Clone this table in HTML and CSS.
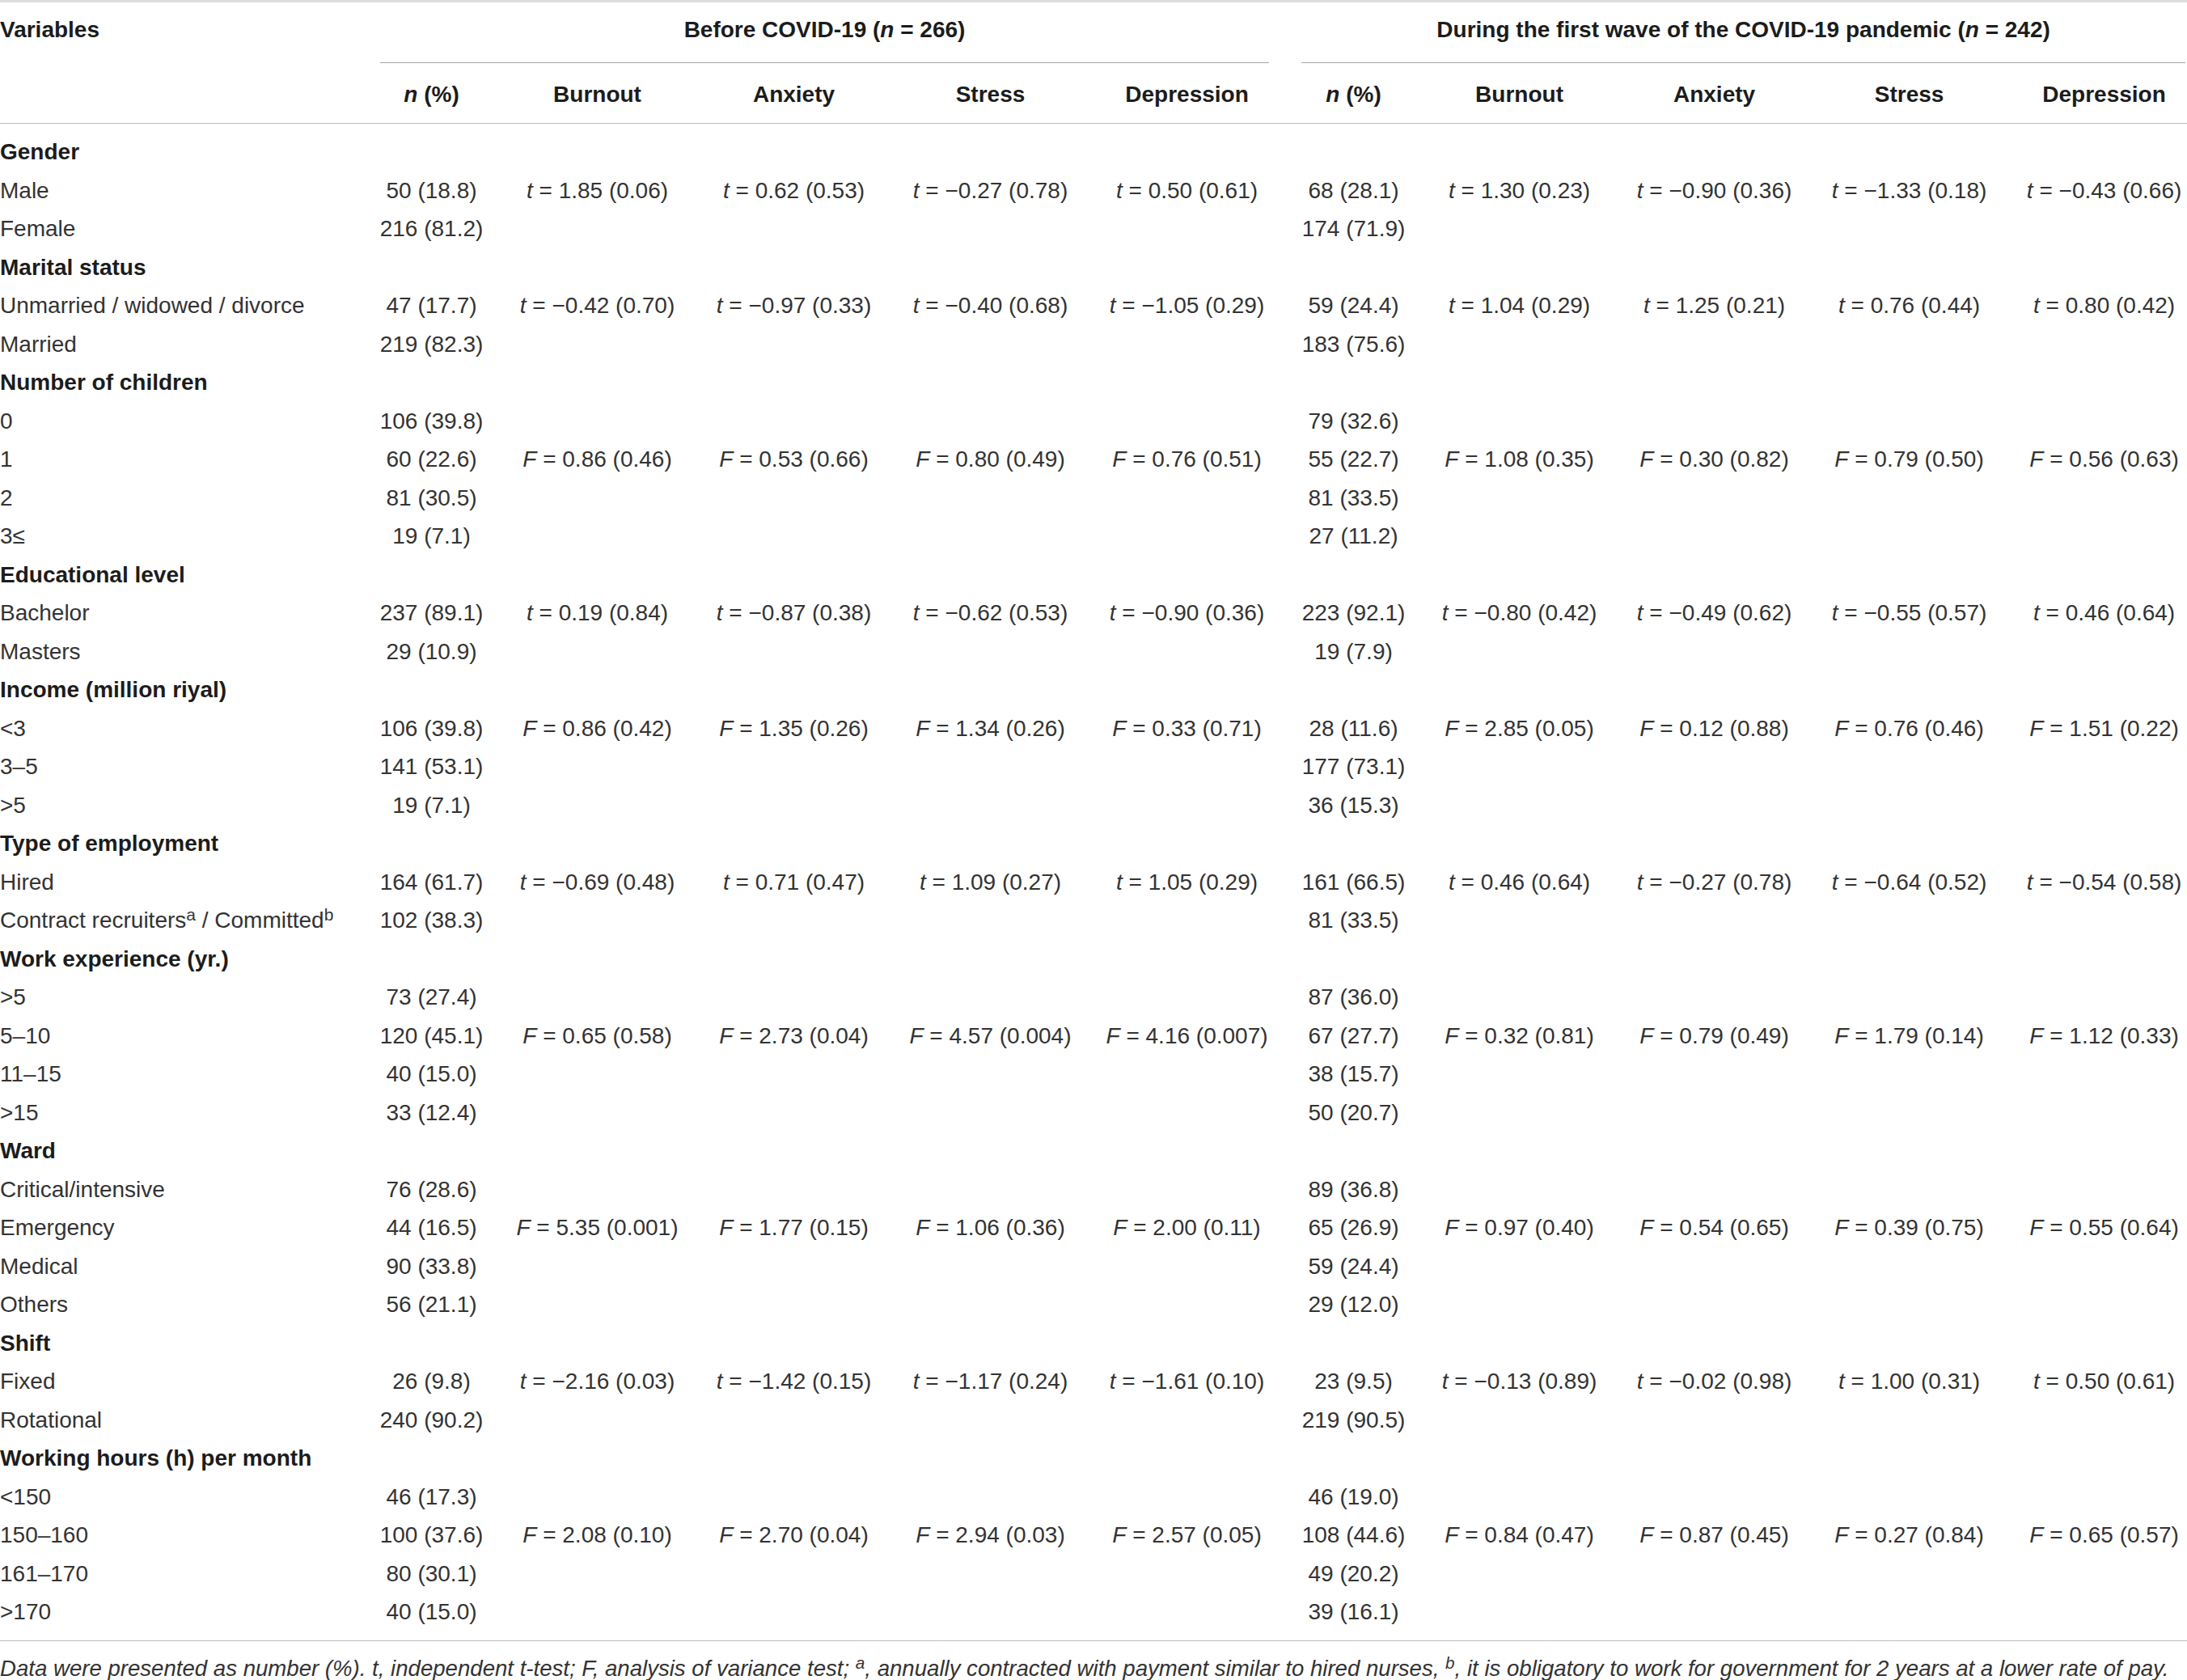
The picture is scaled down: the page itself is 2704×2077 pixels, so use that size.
FILE: index.html
```html
<!DOCTYPE html>
<html lang="en">
<head>
    <meta charset="UTF-8">
    <meta name="viewport" content="width=device-width, initial-scale=1.0">
    <title>Table: burnout, anxiety, stress and depression by demographic variables</title>
    <link rel="stylesheet" href="styles.css">
</head>
<body>
    <table class="data-table">
        <colgroup>
            <col class="col-label">
            <col class="col-n1">
            <col class="col-stat1"><col class="col-stat1"><col class="col-stat1"><col class="col-stat1">
            <col class="col-n2">
            <col class="col-stat2"><col class="col-stat2"><col class="col-stat2"><col class="col-stat2">
        </colgroup>
        <thead>
            <tr class="group-row">
                <th class="label">Variables</th>
                <th class="group" colspan="5"><div class="group-title">Before COVID-19 (<i>n</i> = 266)</div></th>
                <th class="group" colspan="5"><div class="group-title">During the first wave of the COVID-19 pandemic (<i>n</i> = 242)</div></th>
            </tr>
            <tr class="head-row">
                <th class="label"></th>
                <th><i>n</i> (%)</th>
                <th>Burnout</th>
                <th>Anxiety</th>
                <th>Stress</th>
                <th>Depression</th>
                <th><i>n</i> (%)</th>
                <th>Burnout</th>
                <th>Anxiety</th>
                <th>Stress</th>
                <th>Depression</th>
            </tr>
        </thead>
        <tbody>
            <tr class="category"><td colspan="11">Gender</td></tr>
            <tr><td>Male</td><td>50 (18.8)</td><td><i>t</i> = 1.85 (0.06)</td><td><i>t</i> = 0.62 (0.53)</td><td><i>t</i> = −0.27 (0.78)</td><td><i>t</i> = 0.50 (0.61)</td><td>68 (28.1)</td><td><i>t</i> = 1.30 (0.23)</td><td><i>t</i> = −0.90 (0.36)</td><td><i>t</i> = −1.33 (0.18)</td><td><i>t</i> = −0.43 (0.66)</td></tr>
            <tr><td>Female</td><td>216 (81.2)</td><td></td><td></td><td></td><td></td><td>174 (71.9)</td><td></td><td></td><td></td><td></td></tr>

            <tr class="category"><td colspan="11">Marital status</td></tr>
            <tr><td>Unmarried / widowed / divorce</td><td>47 (17.7)</td><td><i>t</i> = −0.42 (0.70)</td><td><i>t</i> = −0.97 (0.33)</td><td><i>t</i> = −0.40 (0.68)</td><td><i>t</i> = −1.05 (0.29)</td><td>59 (24.4)</td><td><i>t</i> = 1.04 (0.29)</td><td><i>t</i> = 1.25 (0.21)</td><td><i>t</i> = 0.76 (0.44)</td><td><i>t</i> = 0.80 (0.42)</td></tr>
            <tr><td>Married</td><td>219 (82.3)</td><td></td><td></td><td></td><td></td><td>183 (75.6)</td><td></td><td></td><td></td><td></td></tr>

            <tr class="category"><td colspan="11">Number of children</td></tr>
            <tr><td>0</td><td>106 (39.8)</td><td></td><td></td><td></td><td></td><td>79 (32.6)</td><td></td><td></td><td></td><td></td></tr>
            <tr><td>1</td><td>60 (22.6)</td><td><i>F</i> = 0.86 (0.46)</td><td><i>F</i> = 0.53 (0.66)</td><td><i>F</i> = 0.80 (0.49)</td><td><i>F</i> = 0.76 (0.51)</td><td>55 (22.7)</td><td><i>F</i> = 1.08 (0.35)</td><td><i>F</i> = 0.30 (0.82)</td><td><i>F</i> = 0.79 (0.50)</td><td><i>F</i> = 0.56 (0.63)</td></tr>
            <tr><td>2</td><td>81 (30.5)</td><td></td><td></td><td></td><td></td><td>81 (33.5)</td><td></td><td></td><td></td><td></td></tr>
            <tr><td>3≤</td><td>19 (7.1)</td><td></td><td></td><td></td><td></td><td>27 (11.2)</td><td></td><td></td><td></td><td></td></tr>

            <tr class="category"><td colspan="11">Educational level</td></tr>
            <tr><td>Bachelor</td><td>237 (89.1)</td><td><i>t</i> = 0.19 (0.84)</td><td><i>t</i> = −0.87 (0.38)</td><td><i>t</i> = −0.62 (0.53)</td><td><i>t</i> = −0.90 (0.36)</td><td>223 (92.1)</td><td><i>t</i> = −0.80 (0.42)</td><td><i>t</i> = −0.49 (0.62)</td><td><i>t</i> = −0.55 (0.57)</td><td><i>t</i> = 0.46 (0.64)</td></tr>
            <tr><td>Masters</td><td>29 (10.9)</td><td></td><td></td><td></td><td></td><td>19 (7.9)</td><td></td><td></td><td></td><td></td></tr>

            <tr class="category"><td colspan="11">Income (million riyal)</td></tr>
            <tr><td>&lt;3</td><td>106 (39.8)</td><td><i>F</i> = 0.86 (0.42)</td><td><i>F</i> = 1.35 (0.26)</td><td><i>F</i> = 1.34 (0.26)</td><td><i>F</i> = 0.33 (0.71)</td><td>28 (11.6)</td><td><i>F</i> = 2.85 (0.05)</td><td><i>F</i> = 0.12 (0.88)</td><td><i>F</i> = 0.76 (0.46)</td><td><i>F</i> = 1.51 (0.22)</td></tr>
            <tr><td>3–5</td><td>141 (53.1)</td><td></td><td></td><td></td><td></td><td>177 (73.1)</td><td></td><td></td><td></td><td></td></tr>
            <tr><td>&gt;5</td><td>19 (7.1)</td><td></td><td></td><td></td><td></td><td>36 (15.3)</td><td></td><td></td><td></td><td></td></tr>

            <tr class="category"><td colspan="11">Type of employment</td></tr>
            <tr><td>Hired</td><td>164 (61.7)</td><td><i>t</i> = −0.69 (0.48)</td><td><i>t</i> = 0.71 (0.47)</td><td><i>t</i> = 1.09 (0.27)</td><td><i>t</i> = 1.05 (0.29)</td><td>161 (66.5)</td><td><i>t</i> = 0.46 (0.64)</td><td><i>t</i> = −0.27 (0.78)</td><td><i>t</i> = −0.64 (0.52)</td><td><i>t</i> = −0.54 (0.58)</td></tr>
            <tr><td>Contract recruiters<sup>a</sup> / Committed<sup>b</sup></td><td>102 (38.3)</td><td></td><td></td><td></td><td></td><td>81 (33.5)</td><td></td><td></td><td></td><td></td></tr>

            <tr class="category"><td colspan="11">Work experience (yr.)</td></tr>
            <tr><td>&gt;5</td><td>73 (27.4)</td><td></td><td></td><td></td><td></td><td>87 (36.0)</td><td></td><td></td><td></td><td></td></tr>
            <tr><td>5–10</td><td>120 (45.1)</td><td><i>F</i> = 0.65 (0.58)</td><td><i>F</i> = 2.73 (0.04)</td><td><i>F</i> = 4.57 (0.004)</td><td><i>F</i> = 4.16 (0.007)</td><td>67 (27.7)</td><td><i>F</i> = 0.32 (0.81)</td><td><i>F</i> = 0.79 (0.49)</td><td><i>F</i> = 1.79 (0.14)</td><td><i>F</i> = 1.12 (0.33)</td></tr>
            <tr><td>11–15</td><td>40 (15.0)</td><td></td><td></td><td></td><td></td><td>38 (15.7)</td><td></td><td></td><td></td><td></td></tr>
            <tr><td>&gt;15</td><td>33 (12.4)</td><td></td><td></td><td></td><td></td><td>50 (20.7)</td><td></td><td></td><td></td><td></td></tr>

            <tr class="category"><td colspan="11">Ward</td></tr>
            <tr><td>Critical/intensive</td><td>76 (28.6)</td><td></td><td></td><td></td><td></td><td>89 (36.8)</td><td></td><td></td><td></td><td></td></tr>
            <tr><td>Emergency</td><td>44 (16.5)</td><td><i>F</i> = 5.35 (0.001)</td><td><i>F</i> = 1.77 (0.15)</td><td><i>F</i> = 1.06 (0.36)</td><td><i>F</i> = 2.00 (0.11)</td><td>65 (26.9)</td><td><i>F</i> = 0.97 (0.40)</td><td><i>F</i> = 0.54 (0.65)</td><td><i>F</i> = 0.39 (0.75)</td><td><i>F</i> = 0.55 (0.64)</td></tr>
            <tr><td>Medical</td><td>90 (33.8)</td><td></td><td></td><td></td><td></td><td>59 (24.4)</td><td></td><td></td><td></td><td></td></tr>
            <tr><td>Others</td><td>56 (21.1)</td><td></td><td></td><td></td><td></td><td>29 (12.0)</td><td></td><td></td><td></td><td></td></tr>

            <tr class="category"><td colspan="11">Shift</td></tr>
            <tr><td>Fixed</td><td>26 (9.8)</td><td><i>t</i> = −2.16 (0.03)</td><td><i>t</i> = −1.42 (0.15)</td><td><i>t</i> = −1.17 (0.24)</td><td><i>t</i> = −1.61 (0.10)</td><td>23 (9.5)</td><td><i>t</i> = −0.13 (0.89)</td><td><i>t</i> = −0.02 (0.98)</td><td><i>t</i> = 1.00 (0.31)</td><td><i>t</i> = 0.50 (0.61)</td></tr>
            <tr><td>Rotational</td><td>240 (90.2)</td><td></td><td></td><td></td><td></td><td>219 (90.5)</td><td></td><td></td><td></td><td></td></tr>

            <tr class="category"><td colspan="11">Working hours (h) per month</td></tr>
            <tr><td>&lt;150</td><td>46 (17.3)</td><td></td><td></td><td></td><td></td><td>46 (19.0)</td><td></td><td></td><td></td><td></td></tr>
            <tr><td>150–160</td><td>100 (37.6)</td><td><i>F</i> = 2.08 (0.10)</td><td><i>F</i> = 2.70 (0.04)</td><td><i>F</i> = 2.94 (0.03)</td><td><i>F</i> = 2.57 (0.05)</td><td>108 (44.6)</td><td><i>F</i> = 0.84 (0.47)</td><td><i>F</i> = 0.87 (0.45)</td><td><i>F</i> = 0.27 (0.84)</td><td><i>F</i> = 0.65 (0.57)</td></tr>
            <tr><td>161–170</td><td>80 (30.1)</td><td></td><td></td><td></td><td></td><td>49 (20.2)</td><td></td><td></td><td></td><td></td></tr>
            <tr><td>&gt;170</td><td>40 (15.0)</td><td></td><td></td><td></td><td></td><td>39 (16.1)</td><td></td><td></td><td></td><td></td></tr>
        </tbody>
    </table>
    <p class="table-note">Data were presented as number (%). t, independent t-test; F, analysis of variance test; <sup>a</sup>, annually contracted with payment similar to hired nurses, <sup>b</sup>, it is obligatory to work for government for 2 years at a lower rate of pay.</p>
</body>
</html>
```

FILE: styles.css
```css
body {
    margin: 0;
    padding: 0;
    background-color: #ffffff;
    color: #333333;
    font-family: "Liberation Sans", Arial, sans-serif;
    font-size: 28px;
    overflow: hidden;
}
.data-table {
    width: 2722px;
    table-layout: fixed;
    border-collapse: separate;
    border-spacing: 0;
    font-size: 28px;
}
.col-label { width: 450px; }
.col-n1 { width: 167px; }
.col-stat1 { width: 243px; }
.col-n2 { width: 169px; }
.col-stat2 { width: 241px; }

.data-table th {
    padding: 0;
    font-weight: bold;
    color: #1c1c1c;
    text-align: center;
    line-height: 32px;
    white-space: nowrap;
}
.data-table th.label {
    text-align: left;
}
.group-row th {
    border-top: 3px solid #dedede;
}
.group-row th.label {
    padding: 18px 0 25px;
}
.group-row th.group {
    padding: 0 20px;
}
.group-title {
    padding: 18px 0 24px;
    border-bottom: 1px solid #a5a5a5;
}
.head-row th {
    padding: 23px 0 19px;
    border-bottom: 1px solid #bcbcbc;
}

.data-table td {
    padding: 0;
    line-height: 47.5px;
    text-align: center;
    white-space: nowrap;
}
.data-table td:first-child {
    text-align: left;
}
.data-table tr.category td {
    font-weight: bold;
    color: #1c1c1c;
}
.data-table tbody tr:first-child td {
    padding-top: 11px;
}
.data-table tbody tr:last-child td {
    padding-bottom: 11px;
    border-bottom: 1px solid #bcbcbc;
}
sup {
    font-size: 0.75em;
    line-height: 0;
    vertical-align: 0.45em;
}
.table-note {
    margin: 0;
    padding-top: 18px;
    font-size: 27.6px;
    font-style: italic;
    line-height: 32px;
    white-space: nowrap;
}
```
